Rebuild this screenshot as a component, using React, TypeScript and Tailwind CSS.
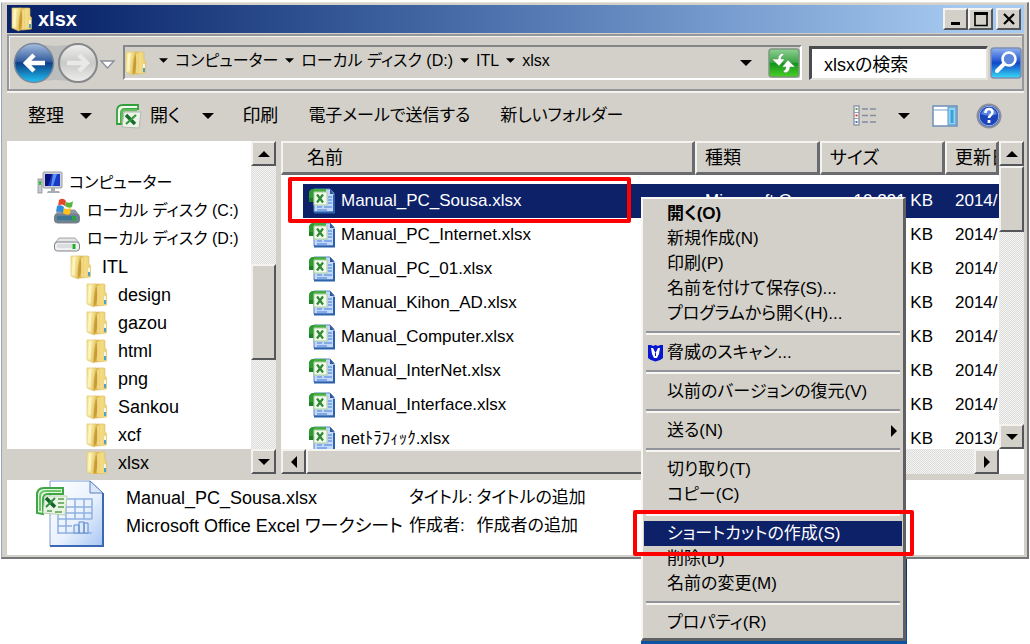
import type { ReactNode } from 'react';
import { useState } from 'react';

const treeItems = [
  { label: 'コンピューター', icon: 'computer', indent: 'pl-[30px]' },
  { label: 'ローカル ディスク (C:)', icon: 'system', indent: 'pl-[46px]' },
  { label: 'ローカル ディスク (D:)', icon: 'drive', indent: 'pl-[46px]' },
  { label: 'ITL', icon: 'folder', indent: 'pl-[63px]' },
  { label: 'design', icon: 'folder', indent: 'pl-[79px]' },
  { label: 'gazou', icon: 'folder', indent: 'pl-[79px]' },
  { label: 'html', icon: 'folder', indent: 'pl-[79px]' },
  { label: 'png', icon: 'folder', indent: 'pl-[79px]' },
  { label: 'Sankou', icon: 'folder', indent: 'pl-[79px]' },
  { label: 'xcf', icon: 'folder', indent: 'pl-[79px]' },
  { label: 'xlsx', icon: 'folder', indent: 'pl-[79px]' },
];

const files = [
  { name: 'Manual_PC_Sousa.xlsx', type: 'Microsoft O', size: '10,291 KB', date: '2014/' },
  { name: 'Manual_PC_Internet.xlsx', type: '', size: 'KB', date: '2014/' },
  { name: 'Manual_PC_01.xlsx', type: '', size: 'KB', date: '2014/' },
  { name: 'Manual_Kihon_AD.xlsx', type: '', size: 'KB', date: '2014/' },
  { name: 'Manual_Computer.xlsx', type: '', size: 'KB', date: '2014/' },
  { name: 'Manual_InterNet.xlsx', type: '', size: 'KB', date: '2014/' },
  { name: 'Manual_Interface.xlsx', type: '', size: 'KB', date: '2014/' },
  { name: 'netﾄﾗﾌｨｯｸ.xlsx', type: '', size: 'KB', date: '2013/' },
];

const menuGroups = [
  ['開く(O)', '新規作成(N)', '印刷(P)', '名前を付けて保存(S)...', 'プログラムから開く(H)...'],
  ['脅威のスキャン...'],
  ['以前のバージョンの復元(V)'],
  ['送る(N)'],
  ['切り取り(T)', 'コピー(C)'],
  ['ショートカットの作成(S)', '削除(D)', '名前の変更(M)'],
  ['プロパティ(R)'],
];

const crumbs = ['コンピューター', 'ローカル ディスク (D:)', 'ITL', 'xlsx'];

const raised =
  'border-2 border-t-[#f4f3ef] border-l-[#f4f3ef] border-r-[#55565a] border-b-[#55565a] bg-[#d3d0c9]';
const track = 'bg-[repeating-conic-gradient(#dcdcda_0_25%,#f4f4f2_0_50%)] bg-[length:2px_2px]';

function Folder() {
  return (
    <svg width="22" height="26" viewBox="0 0 22 26" className="shrink-0" aria-hidden="true">
      <defs>
        <linearGradient id="folderFront" x1="0" x2="1" y1="0" y2=".4">
          <stop offset="0" stopColor="#f1dc83" />
          <stop offset=".35" stopColor="#fcf3b4" />
          <stop offset="1" stopColor="#e2c15a" />
        </linearGradient>
        <linearGradient id="folderSide" x1="0" x2="1">
          <stop offset="0" stopColor="#d3a73e" />
          <stop offset=".5" stopColor="#f4dd85" />
          <stop offset="1" stopColor="#ecd077" />
        </linearGradient>
      </defs>
      <path d="M9 2h9.500l.5 1v7l1.500 1.500V23L12 24H9z" fill="url(#folderSide)" stroke="#dcbb5c" strokeWidth=".6" />
      <path d="M1 2h9v20l-2 3-7-3z" fill="url(#folderFront)" stroke="#e2c468" strokeWidth=".7" />
      <path d="M10 4q3 8 0 18l-2 3q-1-9 2-21z" fill="#c3922e" opacity=".8" />
      <path d="M12 4v19" stroke="#faeba0" strokeWidth="1" />
      <path d="M4 4v17" stroke="#fffde0" strokeWidth="1.4" opacity=".7" />
      <path d="M19 14v4" stroke="#fff" strokeWidth="1.6" />
      <path d="M19 18v4" stroke="#3e9cd0" strokeWidth="1.8" />
    </svg>
  );
}

function Computer() {
  return (
    <svg width="26" height="24" viewBox="0 0 26 24" className="shrink-0" aria-hidden="true">
      <rect x="1" y="8" width="4" height="14" fill="#c6c9cd" stroke="#8c9096" strokeWidth=".8" />
      <path d="M3 10v4" stroke="#1fc72b" strokeWidth="2" />
      <rect x="6" y="1" width="19" height="16" rx="1" fill="#cdd0d4" stroke="#9a9ea5" />
      <rect x="8" y="3" width="15" height="12" fill="#1739c6" />
      <path d="M8 3h7l-4 12H8z" fill="#08127c" />
      <path d="M16 3h4l-4 12h-2z" fill="#5b8df4" />
      <path d="M14 17h4v3h4l1 2H10l1-2h3z" fill="#a8acb1" />
    </svg>
  );
}

function Drive({ system }: { system?: boolean }) {
  return (
    <svg width="28" height="26" viewBox="0 0 28 26" className="shrink-0" aria-hidden="true">
      <path d="m6 12 16 0 4 5H2z" fill={system ? '#8b98a5' : '#e4e5e7'} stroke="#8c9096" strokeWidth=".8" />
      <rect x="1.5" y="16" width="25" height="9" rx="3" fill={system ? '#6c8294' : '#f0f1f2'} stroke="#7e8288" />
      <rect x="4" y="18" width="15" height="4" fill={system ? '#3c7694' : '#dcdddf'} />
      <path d="M21 18v5" stroke="#1fae2b" strokeWidth="3" />
      {system && (
        <>
          <path d="M6 2q4-3 7 1l-1 5q-3-3-7 0z" fill="#e8462a" />
          <path d="M13 4q4 2 7-1l-1 6q-3 2-7-1z" fill="#5cb53a" />
          <path d="M4 8q4-2 7 1l-1 6q-3-3-7-1z" fill="#2f8de0" />
          <path d="M11 10q3 2 7 0l-1 6q-3 2-7-1z" fill="#ffc21a" />
        </>
      )}
    </svg>
  );
}

function ExcelFile() {
  return (
    <svg width="26" height="26" viewBox="0 0 26 26" className="shrink-0" aria-hidden="true">
      <path d="M5 1h16l4 4v19H5z" fill="#c3d8fa" stroke="#5b84c4" />
      <path d="M21 1v5h4z" fill="#2d5693" />
      <path d="M8 19h5M8 22h10M15 19h8M19 9h4M19 12h4M19 15h4" stroke="#6f9be2" strokeWidth="1.6" fill="none" />
      <path d="M5 24.500h20V7" stroke="#2c62ac" strokeWidth="2" fill="none" />
      <path d="M0 14V6q0-5 5-5h12v3H5v10z" fill="#46ad45" />
      <path d="M0 6q0-5 5-5v13H0z" fill="#2f9a34" />
      <rect x="5" y="4" width="13" height="13" fill="#f3faed" stroke="#a9d09a" />
      <path d="m8 6.500 6 8M14 6.500l-6 8" stroke="#2f8a35" strokeWidth="2.200" />
      <path d="M0 10h4v4H0z" fill="#1c7f28" />
    </svg>
  );
}

function ExcelApp() {
  return (
    <svg width="26" height="26" viewBox="0 0 26 26" className="shrink-0" aria-hidden="true">
      <path d="M1 21V8q0-6 6-6h15v4H9q-4 0-4 4v11z" fill="#f5fff1" stroke="#359f3b" strokeWidth="1.8" />
      <path d="M6 20V10q0-3 3-3h12" fill="none" stroke="#61be5c" strokeWidth="2.4" />
      <path d="M8 9h17l-2 16-17-1z" fill="#edf2ea" stroke="#b2b9ae" />
      <path d="m10 12 9 9" stroke="#176b28" strokeWidth="3.4" />
      <path d="m20 12-10 9" stroke="#2f9b3b" strokeWidth="2.2" />
    </svg>
  );
}

function Workbook() {
  return (
    <svg width="70" height="68" viewBox="0 0 70 68" className="shrink-0" aria-hidden="true">
      <defs>
        <linearGradient id="sheet" x1="0" y1="0" x2="1" y2="1">
          <stop offset="0" stopColor="#fff" />
          <stop offset=".55" stopColor="#e9f1fd" />
          <stop offset="1" stopColor="#a7c6f3" />
        </linearGradient>
      </defs>
      <path d="M14 1h40l13 12v53H14z" fill="url(#sheet)" stroke="#7f9fd0" />
      <path d="M54 1v12h13z" fill="#dbe7f8" stroke="#5b7fbb" />
      <path d="M14 66h53V13" fill="none" stroke="#3b68b4" strokeWidth="2" />
      <path
        d="M30 19h26v20M22 27h34M22 33h34M22 39h34M22 46h14M22 53h34M22 34v20M30 19v35M39 19v20M48 19v20"
        fill="none"
        stroke="#8fb1e2"
        strokeWidth="1.5"
      />
      <path d="M38 53v-8h5v8zM43 53V42h5v11zM48 53V43h4v10z" fill="#dce9fb" stroke="#5c8acb" />
      <path d="M1 33V15q0-7 7-7h19v6H12q-5 0-5 6v14z" fill="#e2f7de" stroke="#3fa646" strokeWidth="2" />
      <path d="M4 31V17q0-6 6-6h15" fill="none" stroke="#6cc569" strokeWidth="2" />
      <path d="M9 16h22l-2 19-22-2z" fill="#eaf4e5" stroke="#b9cfb1" />
      <path d="m10 18 9 9" stroke="#14622a" strokeWidth="3.5" />
      <path d="m19 18-9 9" stroke="#2d9040" strokeWidth="2" />
      <path d="M22 19h6M22 23h6M22 27h6M11 31h5M19 32h7" stroke="#7ab573" strokeWidth="2" />
    </svg>
  );
}

function Arrow({ dir = 'down', small }: { dir?: 'up' | 'down' | 'left' | 'right'; small?: boolean }) {
  const paths = {
    down: 'M0 3h12L6 9z',
    up: 'M0 9h12L6 3z',
    left: 'M9 0v12L3 6z',
    right: 'M3 0v12l6-6z',
  };
  const size = small ? 9 : 12;
  return (
    <svg width={size} height={size} viewBox="0 0 12 12" className="shrink-0" aria-hidden="true">
      <path d={paths[dir]} fill="#000" />
    </svg>
  );
}

function ScrollButton({ dir }: { dir: 'up' | 'down' | 'left' | 'right' }) {
  return (
    <button type="button" aria-label={dir} className={`flex size-[25px] shrink-0 items-center justify-center ${raised}`}>
      <Arrow dir={dir} />
    </button>
  );
}

function TitleBar() {
  const button = `flex h-[22px] w-[25px] items-center justify-center ${raised}`;
  return (
    <header className="flex h-7 items-center bg-linear-to-r from-[#0a246a] from-5% via-[#5a7fb8] via-55% to-[#a6caf0] to-95% pr-[3px] pl-1">
      <Folder />
      <h1 className="flex-1 pl-[5px] text-[20px] leading-7 font-bold text-white">xlsx</h1>
      <button type="button" aria-label="最小化" className={button}>
        <svg width="14" height="14" viewBox="0 0 14 14">
          <path d="M2 11.5h9" stroke="#000" strokeWidth="3" />
        </svg>
      </button>
      <button type="button" aria-label="最大化" className={button}>
        <svg width="16" height="16" viewBox="0 0 16 16">
          <path d="M2 2.5h12v12H2z" fill="none" stroke="#000" strokeWidth="1.6" />
          <path d="M1 2.5h14" stroke="#000" strokeWidth="3" />
        </svg>
      </button>
      <button type="button" aria-label="閉じる" className={`ml-[3px] ${button}`}>
        <svg width="14" height="14" viewBox="0 0 14 14">
          <path d="m2 2 10 10M12 2 2 12" stroke="#000" strokeWidth="2.2" />
        </svg>
      </button>
    </header>
  );
}

function NavBar() {
  const [query, setQuery] = useState('xlsxの検索');

  return (
    <div className="mt-px flex h-[57px] items-center border-2 border-[#96979b] pl-1 shadow-[inset_1px_1px_#f4f3ef,0_2px_#f4f3ef]">
      <div className="flex w-[110px] shrink-0">
        <svg width="104" height="46" viewBox="0 0 104 46" aria-hidden="true">
          <defs>
            <linearGradient id="back" x1="0" y1="0" x2="0" y2="1">
              <stop offset="0" stopColor="#a9bfe0" />
              <stop offset=".45" stopColor="#355f9f" />
              <stop offset=".5" stopColor="#0d3f86" />
              <stop offset="1" stopColor="#20c2f4" />
            </linearGradient>
            <linearGradient id="forward" x1="0" y1="0" x2="0" y2="1">
              <stop offset="0" stopColor="#f0f0ef" />
              <stop offset=".5" stopColor="#c9c9c7" />
              <stop offset="1" stopColor="#eeeeec" />
            </linearGradient>
          </defs>
          <path d="M20 3q22 6 45 0v40q-23-6-45 0z" fill="#bcbdbd" />
          <circle cx="21" cy="23" r="19.5" fill="url(#back)" stroke="#7a8798" strokeWidth="1.5" />
          <path d="M32 23H13m8-8-8 8 8 8" fill="none" stroke="#fff" strokeWidth="4.5" />
          <circle cx="65" cy="23" r="19" fill="url(#forward)" stroke="#858789" strokeWidth="2" />
          <path d="M54 23h20m-8-8 8 8-8 8" fill="none" stroke="#e9e9e7" strokeWidth="4.5" />
          <path d="M88 21h13l-6.500 7z" fill="#fff" stroke="#8b909b" strokeWidth="1.4" />
        </svg>
      </div>
      <div className="flex h-[35px] min-w-0 flex-1 items-center border-2 border-t-[#85868a] border-r-white border-b-white border-l-[#85868a]">
        <Folder />
        <nav className="flex flex-1 items-center gap-[7px] pb-1 pl-3 text-[16px] whitespace-nowrap">
          {crumbs.map((crumb) => (
            <a key={crumb} href="#" className="flex items-center gap-[7px]">
              <Arrow small />
              {crumb}
            </a>
          ))}
        </nav>
        <button type="button" aria-label="履歴" className="mr-4">
          <Arrow />
        </button>
        <button type="button" aria-label="更新">
          <svg width="32" height="30" viewBox="0 0 32 30">
            <defs>
              <linearGradient id="refresh" x1="0" y1="0" x2="0" y2="1">
                <stop offset="0" stopColor="#8fd092" />
                <stop offset=".48" stopColor="#3ba546" />
                <stop offset=".5" stopColor="#12941b" />
                <stop offset="1" stopColor="#48cf25" />
              </linearGradient>
            </defs>
            <rect x="1" y="1" width="30" height="28" rx="3" fill="url(#refresh)" stroke="#7d9780" strokeWidth="1.5" />
            <path d="M15 5q-5 1-5 6H4l7 7 6-7h-4q0-3 3-4zM17 25q5-1 5-6h5l-7-7-6 7h4q0 3-3 4z" fill="#fff" stroke="#5d9b61" strokeWidth=".6" />
          </svg>
        </button>
      </div>
      <input
        type="text"
        aria-label="xlsxの検索"
        value={query}
        onChange={(e) => setQuery(e.target.value)}
        className="ml-[7px] h-[34px] w-[179px] border-t-3 border-r-2 border-b-2 border-l-3 border-t-[#4b4c50] border-r-[#e4e2dc] border-b-[#e4e2dc] border-l-[#4b4c50] bg-white pl-3 text-[18px] text-black outline-none"
      />
      <button type="button" aria-label="検索" className="ml-0.5">
        <svg width="32" height="32" viewBox="0 0 32 32">
          <defs>
            <linearGradient id="search" x1="0" y1="0" x2="0" y2="1">
              <stop offset="0" stopColor="#8fb2ef" />
              <stop offset=".4" stopColor="#2c5fd6" />
              <stop offset=".5" stopColor="#1147c5" />
              <stop offset="1" stopColor="#37dcf9" />
            </linearGradient>
          </defs>
          <rect x="1" y="1" width="30" height="30" rx="3" fill="url(#search)" stroke="#7d8fb4" strokeWidth="1.5" />
          <circle cx="19" cy="12" r="6.5" fill="#5e86dc" stroke="#fff" strokeWidth="2.6" />
          <path d="m14 17-7 7" stroke="#fff" strokeWidth="4" strokeLinecap="round" />
        </svg>
      </button>
    </div>
  );
}

function Toolbar() {
  return (
    <div className="flex h-[50px] items-center pr-[22px] pl-[21px] text-[18px] whitespace-nowrap">
      <button type="button" className="flex items-center gap-4">
        整理
        <Arrow />
      </button>
      <button type="button" className="ml-6 flex items-center gap-2">
        <ExcelApp />
        開く
      </button>
      <button type="button" aria-label="開くメニュー" className="ml-[22px]">
        <Arrow />
      </button>
      <button type="button" className="ml-7">印刷</button>
      <button type="button" className="ml-[30px] text-[17px]">電子メールで送信する</button>
      <button type="button" className="ml-[30px] text-[17px]">新しいフォルダー</button>
      <div className="ml-auto flex items-center">
        <button type="button" aria-label="表示方法">
          <svg width="26" height="22" viewBox="0 0 26 22">
            <path d="M2 1h5v19H2z" fill="#fff" stroke="#9498a8" strokeWidth="1.5" />
            <path d="M2 7.5h5M2 13.5h5" stroke="#9498a8" />
            <path d="M10 4h6m2 0h6M10 10.500h6m2 0h6M10 17h6m2 0h6" stroke="#828ba0" strokeWidth="1.6" />
            <path d="M3.500 4h2" stroke="#4fa64c" strokeWidth="2" />
            <path d="M3.500 10.500h2" stroke="#e33528" strokeWidth="2" />
            <path d="M3.500 17h2" stroke="#2b78dd" strokeWidth="2" />
          </svg>
        </button>
        <button type="button" aria-label="表示メニュー" className="ml-5">
          <Arrow />
        </button>
        <button type="button" aria-label="プレビュー ウィンドウ" className="ml-[22px]">
          <svg width="26" height="22" viewBox="0 0 26 22">
            <rect x="1" y="1" width="24" height="20" fill="#fff" stroke="#6f8fb8" strokeWidth="1.500" />
            <path d="M2 5h14" stroke="#a5bfdf" strokeWidth="1.5" />
            <path d="M16 2h8v18h-8z" fill="#8ed3f3" stroke="#5c93c4" />
            <path d="M20 5v13" stroke="#3ba2d8" strokeWidth="3" />
          </svg>
        </button>
        <button type="button" aria-label="ヘルプ" className="ml-[18px]">
          <svg width="26" height="26" viewBox="0 0 26 26">
            <circle cx="13" cy="13" r="11.5" fill="#1c45b8" stroke="#8a909e" strokeWidth="2" />
            <circle cx="13" cy="13" r="9.8" fill="none" stroke="#9db7ee" />
            <path d="M5 11q8 3 16 0a8.500 8.500 0 0 0-16 0z" fill="#5c86e4" />
            <path d="M9.500 10q0-4 3.500-4t3.500 3.300q0 1.700-2 3-1.500 1-1.500 2.700" fill="none" stroke="#fff" strokeWidth="2.600" />
            <path d="M13 17v3" stroke="#fff" strokeWidth="2.800" />
          </svg>
        </button>
      </div>
    </div>
  );
}

function TreeIcon({ icon }: { icon: string }) {
  if (icon === 'computer') return <Computer />;
  if (icon === 'system') return <Drive system />;
  if (icon === 'drive') return <Drive />;
  return <Folder />;
}

function Tree() {
  return (
    <aside className="flex w-[269px] shrink-0">
      <ul className="flex-1 overflow-hidden bg-white pt-7">
        {treeItems.map((item) => (
          <li key={item.label} className={item.label === 'xlsx' ? 'bg-[#d3d0c9]' : ''}>
            <a
              href="#"
              className={`flex h-7 items-center whitespace-nowrap ${item.indent} ${
                item.icon === 'folder' ? 'gap-[10px] text-[18px]' : 'gap-[6px] text-[16px]'
              }`}
            >
              <TreeIcon icon={item.icon} />
              {item.label}
            </a>
          </li>
        ))}
      </ul>
      <div className={`flex w-[25px] shrink-0 flex-col ${track}`}>
        <ScrollButton dir="up" />
        <div className="h-[98px]" />
        <div className={`h-[96px] ${raised}`} />
        <div className="flex-1" />
        <ScrollButton dir="down" />
      </div>
    </aside>
  );
}

function HeaderCell({ children, className }: { children: ReactNode; className: string }) {
  return (
    <th
      className={`h-[34px] overflow-hidden border-t-2 border-r-3 border-b-3 border-l-2 border-t-[#f4f3ef] border-r-[#6a6b6e] border-b-[#6a6b6e] border-l-[#f4f3ef] p-0 text-left text-[18px] leading-6 font-normal whitespace-nowrap ${className}`}
    >
      {children}
    </th>
  );
}

function FileList() {
  return (
    <section className="flex min-w-0 flex-1 flex-col bg-white">
      <div className="flex min-h-0 flex-1">
        <div className="min-w-0 flex-1 overflow-hidden">
          <table className="w-full table-fixed border-separate border-spacing-0">
            <thead className="bg-[#d3d0c9]">
              <tr>
                <HeaderCell className="pl-6">名前</HeaderCell>
                <HeaderCell className="w-[125px] pl-2">種類</HeaderCell>
                <HeaderCell className="w-[125px] pl-2">サイズ</HeaderCell>
                <HeaderCell className="w-[54px] pl-2">更新日時</HeaderCell>
              </tr>
            </thead>
            <tbody className="text-[17px] whitespace-nowrap before:block before:h-[9px] before:content-['']">
              {files.map((file, i) => {
                const selected = i === 0 ? 'bg-[#0d2169] text-white' : '';
                return (
                  <tr key={file.name} className="h-[34px]">
                    <td className="p-0 pl-[22px]">
                      <div className={`flex h-[34px] items-center gap-[6px] pl-[6px] ${selected}`}>
                        <ExcelFile />
                        {file.name}
                      </div>
                    </td>
                    <td className={`p-0 pl-[10px] ${selected}`}>{file.type}</td>
                    <td className={`p-0 pr-3 text-right ${selected}`}>{file.size}</td>
                    <td className={`p-0 pl-[10px] ${selected}`}>{file.date}</td>
                  </tr>
                );
              })}
            </tbody>
          </table>
        </div>
        <div className={`flex w-[25px] shrink-0 flex-col ${track}`}>
          <ScrollButton dir="up" />
          <div className={`h-[66px] ${raised}`} />
          <div className="flex-1" />
          <ScrollButton dir="down" />
        </div>
      </div>
      <div className="flex h-[25px] shrink-0 pr-[25px]">
        <ScrollButton dir="left" />
        <div className={`w-5/6 ${raised}`} />
        <div className={`flex-1 ${track}`} />
        <ScrollButton dir="right" />
      </div>
    </section>
  );
}

function Details() {
  return (
    <footer className="mt-[6px] flex h-[75px] overflow-hidden bg-white pl-[29px] text-[18px] whitespace-nowrap">
      <Workbook />
      <div className="w-[281px] pt-1 pl-5 leading-7">
        <p>Manual_PC_Sousa.xlsx</p>
        <p>Microsoft Office Excel ワークシート</p>
      </div>
      <dl className="grid grid-cols-[auto_1fr] content-start gap-x-1 pt-1 pl-[22px] text-[17px] leading-7">
        <dt>タイトル:</dt>
        <dd>タイトルの追加</dd>
        <dt>作成者:</dt>
        <dd>作成者の追加</dd>
      </dl>
    </footer>
  );
}

function ContextMenu() {
  return (
    <div
      role="menu"
      className="absolute top-[197px] left-[641px] w-[265px] border-t-2 border-r-3 border-b-3 border-l-2 border-t-[#f8f7f3] border-r-[#5f6064] border-b-[#5f6064] border-l-[#f8f7f3] bg-[#d3d0c9] px-px pt-0.5 pb-[3px] text-[17px] whitespace-nowrap"
    >
      {menuGroups.map((group, i) => (
        <div key={group[0]}>
          {i > 0 && <hr className="mx-0.5 my-[5px] h-1 border-t-2 border-b-2 border-t-[#919599] border-b-[#f8f7f3]" />}
          {group.map((item) => (
            <button
              key={item}
              type="button"
              role="menuitem"
              className={`flex h-[25px] w-full items-center pl-[3px] text-left ${
                item.startsWith('ショート') ? 'bg-[#0d2169] text-white' : ''
              } ${item === '開く(O)' ? 'font-bold' : ''}`}
            >
              <span className="w-5 shrink-0">
                {item.startsWith('脅威') && (
                  <svg width="17" height="18" viewBox="0 0 17 18" aria-hidden="true">
                    <path d="M1 1h3l2 1 2.500-1L11 2l2-1h3v13q-3 3-7.500 3.500Q4 17 1 14z" fill="#0716d0" />
                    <path d="M4 4h2l2.500 5L11 4h2l-1 6-2 4H7l-2-4z" fill="#fff" />
                    <path d="M8.500 9v3" stroke="#0716d0" />
                  </svg>
                )}
              </span>
              <span className="flex-1">{item}</span>
              {item.startsWith('送る') && (
                <span className="pr-0.5">
                  <Arrow dir="right" />
                </span>
              )}
            </button>
          ))}
        </div>
      ))}
    </div>
  );
}

export default function App() {
  return (
    <main className="relative min-h-screen overflow-hidden bg-white pt-0.5 pr-px pl-px font-['Liberation_Sans','Noto_Sans_CJK_JP',sans-serif] text-black [font-feature-settings:'palt']">
      <div className="border-t border-r-2 border-b-2 border-l border-t-[#e4e2dc] border-r-[#77787b] border-b-[#77787b] border-l-[#9aa6b8] bg-[#d3d0c9] pt-0.5 pr-[3px] pb-0.5 pl-[5px]">
        <TitleBar />
        <NavBar />
        <Toolbar />
        <div className="flex h-[333px]">
          <Tree />
          <div className="w-[5px] shrink-0" />
          <FileList />
        </div>
        <Details />
      </div>

      {/* desktop showing behind the menu */}
      <div className="absolute top-[559px] left-[641px] h-[85px] w-[266px] bg-linear-to-b from-[#0a2a5c] to-[#0b55a4]" />
      <ContextMenu />

      <div className="pointer-events-none absolute top-[177px] left-[288px] h-[46px] w-[343px] rounded-xs border-4 border-[#fe0000]" />
      <div className="pointer-events-none absolute top-[510px] left-[633px] h-[46px] w-[281px] rounded-xs border-4 border-[#fe0000]" />
    </main>
  );
}
